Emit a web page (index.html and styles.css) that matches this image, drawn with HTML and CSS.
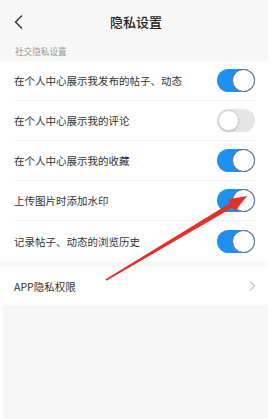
FILE: index.html
```html
<!DOCTYPE html>
<html lang="zh">
<head>
<meta charset="utf-8">
<title>隐私设置</title>
<link rel="stylesheet" href="styles.css">
</head>
<body>
<div class="page">
  <header class="topbar">
    <svg class="back" width="12" height="16" viewBox="0 0 12 16"><polyline points="9,1.5 2.5,8 9,14.5" fill="none" stroke="#333" stroke-width="1.4"/></svg>
    <h1 class="title">隐私设置</h1>
  </header>
  <div class="label">社交隐私设置</div>
  <ul class="list">
    <li class="row"><span class="text">在个人中心展示我发布的帖子、动态</span><span class="switch on"><i class="knob"></i></span></li>
    <li class="row"><span class="text">在个人中心展示我的评论</span><span class="switch"><i class="knob"></i></span></li>
    <li class="row"><span class="text">在个人中心展示我的收藏</span><span class="switch on"><i class="knob"></i></span></li>
    <li class="row"><span class="text">上传图片时添加水印</span><span class="switch on"><i class="knob"></i></span></li>
    <li class="row"><span class="text">记录帖子、动态的浏览历史</span><span class="switch on"><i class="knob"></i></span></li>
  </ul>
  <div class="gap"></div>
  <div class="list single">
    <div class="row link"><span class="text">APP隐私权限</span>
      <svg class="chev" width="8" height="12" viewBox="0 0 8 12"><polyline points="2,1.5 6.5,6 2,10.5" fill="none" stroke="#c8c8c8" stroke-width="1.3"/></svg>
    </div>
  </div>
  <div class="rest"></div>
  <svg class="arrow" width="272" height="419" viewBox="0 0 272 419">
    <polygon points="105.6,279.3 230.2,203.1 227.9,199.2 247,196 235.1,211.2 232.8,207.4 106.4,280.7" fill="#e5302a"/>
  </svg>
</div>
</body>
</html>
```

FILE: styles.css
```css
* { box-sizing: border-box; }
html, body { margin: 0; padding: 0; background: #ffffff; }
body { font-family: "Noto Sans CJK SC", "Noto Sans", sans-serif; color: #333; }
.page { position: relative; width: 272px; height: 419px; overflow: hidden; background: #ffffff; }
.topbar { height: 40px; margin-right: 4px; background: #f7f7f7; display: flex; align-items: center; justify-content: center; position: relative; }
.back { position: absolute; left: 13px; top: 14px; }
.title { margin: 0 0 0 4px; font-size: 13px; font-weight: 500; color: #222; line-height: 1; padding-top: 3px; }
.label { height: 21px; margin-right: 4px; background: #f7f7f7; padding-left: 15px; font-size: 8.6px; color: #999; display: flex; align-items: center; }
.list { list-style: none; margin: 0; padding: 0; background: #fff; }
.row { height: 40px; margin: 0 15px 0 14px; display: flex; align-items: center; justify-content: space-between; border-bottom: 1px solid #f1f1f1; }
.list .row:last-child { border-bottom: none; }
.text { font-size: 10.5px; color: #333; }
.switch { width: 38px; height: 23px; border-radius: 12px; background: #e6e6e6; position: relative; margin-right: 2px; flex: none; }
.switch.on { background: #1f8ff0; }
.knob { position: absolute; top: 1px; left: 1px; width: 21px; height: 21px; border-radius: 50%; background: #fff; border: 1px solid #d0d0d0; box-shadow: 0 1px 2px rgba(0,0,0,0.15); }
.switch.on .knob { left: auto; right: 0; top: 0; width: 23px; height: 23px; border: 1px solid #5a6a78; box-shadow: none; }
.gap { height: 6px; margin-right: 4px; background: #f7f7f7; }
.single .row { height: 38px; border-bottom: none; }
.chev { margin-right: 1px; }
.rest { height: 120px; margin: 0 4px 0 3px; background: #f7f7f7; }
.arrow { position: absolute; left: 0; top: 0; pointer-events: none; }
```
